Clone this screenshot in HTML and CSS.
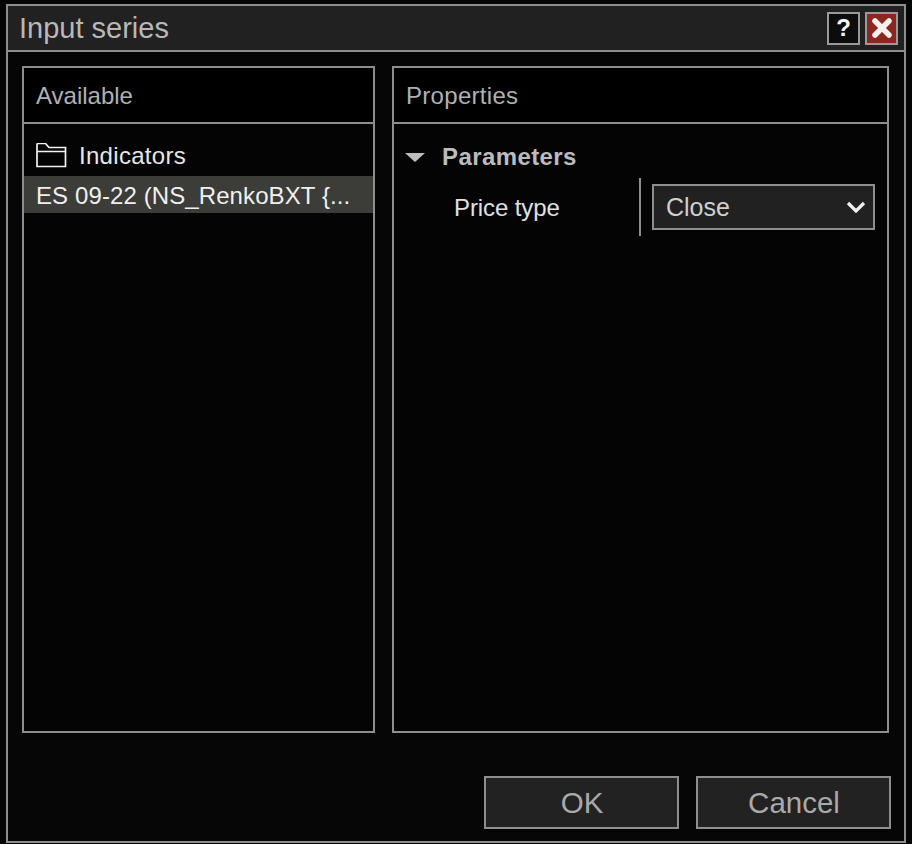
FILE: index.html
```html
<!DOCTYPE html>
<html lang="en">
  <head>
    <meta charset="UTF-8" />
    <meta name="viewport" content="width=device-width, initial-scale=1.0" />
    <title>Input series</title>
    <link rel="stylesheet" href="styles.css">
  </head>
  <body>
    <div class="dialog">
      <div class="titlebar">
        <span class="title">Input series</span>
        <button class="win-btn help">?</button>
        <button class="win-btn close">
          <svg width="24" height="24" viewBox="0 0 24 24">
            <path d="M5 5 L19 19 M19 5 L5 19" stroke="#f4f0ee" stroke-width="5.5" stroke-linecap="round" />
          </svg>
        </button>
      </div>
      <div class="content">
        <div class="panel available">
          <div class="panel-header">Available</div>
          <div class="tree">
            <div class="folder-row">
              <svg class="folder" width="32" height="26" viewBox="0 0 32 26">
                <path d="M2 23.500 V1.500 Q2 0.500 3 0.500 H10.500 L14 4.500 H30.500 V23.500 Z M2 8.500 H30.500" fill="none" stroke="#f2f2f2" stroke-width="1.700" />
              </svg>
              <span>Indicators</span>
            </div>
            <div class="series-row">ES 09-22 (NS_RenkoBXT {...</div>
          </div>
        </div>
        <div class="panel properties">
          <div class="panel-header">Properties</div>
          <div class="group-row">
            <span class="caret"></span>
            <span class="group-name">Parameters</span>
          </div>
          <div class="prop-row">
            <div class="prop-label">Price type</div>
            <div class="prop-value">
              <div class="select">
                <span>Close</span>
                <svg class="chevron" width="20" height="14" viewBox="0 0 20 14">
                  <path d="M2 3 L10 11 L18 3" fill="none" stroke="#f0f0f0" stroke-width="3.200" />
                </svg>
              </div>
            </div>
          </div>
        </div>
      </div>
      <div class="footer">
        <button class="action">OK</button>
        <button class="action">Cancel</button>
      </div>
    </div>
  </body>
</html>
```

FILE: styles.css
```css
body {
  margin: 0;
  height: 844px;
  overflow: hidden;
  background-color: #050505;
  font-family: "Liberation Sans", Arial, sans-serif;
  color: #c8c8c8;
}
.dialog {
  box-sizing: border-box;
  width: 900px;
  height: 839px;
  margin: 4px 0 0 6px;
  border: 2px solid #8e8e8e;
  background: #060606;
  display: flex;
  flex-direction: column;
}
.titlebar {
  box-sizing: border-box;
  height: 46px;
  flex: none;
  background: #212121;
  border-bottom: 2px solid #8e8e8e;
  display: flex;
  align-items: center;
  padding: 0 6px 0 11px;
}
.title {
  flex: 1;
  font-size: 29px;
  color: #b8b8b8;
}
.win-btn {
  box-sizing: border-box;
  width: 33px;
  height: 33px;
  padding: 0;
  margin-left: 5px;
  border: 2px solid #9a9a9a;
  display: flex;
  align-items: center;
  justify-content: center;
}
.help {
  background: #0c0c0c;
  color: #f4f4f4;
  font: bold 24px "Liberation Sans", Arial, sans-serif;
}
.close {
  background: #8c2620;
}
.content {
  flex: 1;
  display: flex;
  gap: 17px;
  padding: 14px 0 0 14px;
}
.panel {
  box-sizing: border-box;
  height: 667px;
  border: 2px solid #8e8e8e;
  background: #040404;
}
.available {
  width: 353px;
}
.properties {
  width: 497px;
}
.panel-header {
  box-sizing: border-box;
  height: 56px;
  border-bottom: 2px solid #8e8e8e;
  padding: 1px 12px 0;
  display: flex;
  align-items: center;
  font-size: 24px;
  color: #b0b0b0;
  background: #000;
}
.properties .panel-header {
  letter-spacing: 0.3px;
}
.tree {
  padding-top: 12px;
}
.folder-row {
  height: 40px;
  display: flex;
  align-items: center;
  padding-left: 11px;
  font-size: 24px;
  letter-spacing: 0.3px;
  color: #e6e6e6;
}
.folder {
  margin-right: 12px;
}
.series-row {
  height: 37px;
  line-height: 39px;
  padding-left: 12px;
  background: #3c3c38;
  font-size: 24px;
  letter-spacing: 0.1px;
  color: #f0f0f0;
  white-space: nowrap;
}
.group-row {
  height: 54px;
  display: flex;
  align-items: center;
  padding: 12px 0 0 11px;
  box-sizing: border-box;
}
.caret {
  width: 0;
  height: 0;
  border-left: 10px solid transparent;
  border-right: 10px solid transparent;
  border-top: 9px solid #bdbdbd;
  margin-right: 17px;
}
.group-name {
  font-size: 24px;
  font-weight: bold;
  letter-spacing: 0.4px;
  color: #bcbcbc;
}
.prop-row {
  display: flex;
  height: 58px;
}
.prop-label {
  box-sizing: border-box;
  width: 247px;
  border-right: 2px solid #8e8e8e;
  padding-left: 60px;
  line-height: 60px;
  font-size: 24px;
  letter-spacing: -0.1px;
  color: #e0e0e0;
}
.prop-value {
  padding: 6px 0 0 11px;
}
.select {
  box-sizing: border-box;
  width: 223px;
  height: 46px;
  border: 2px solid #8e8e8e;
  background: #212121;
  display: flex;
  align-items: center;
  justify-content: space-between;
  padding: 0 0 0 12px;
  font-size: 25px;
  color: #d0d0d0;
}
.chevron {
  margin-right: 7px;
}
.footer {
  flex: 1;
  display: flex;
  justify-content: flex-end;
  gap: 17px;
  padding: 43px 13px 0 0;
}
.action {
  box-sizing: border-box;
  width: 195px;
  height: 53px;
  border: 2px solid #8e8e8e;
  background: #222;
  color: #aaa;
  font: 29.5px "Liberation Sans", Arial, sans-serif;
  padding: 1px 0 0 1px;
}
```
